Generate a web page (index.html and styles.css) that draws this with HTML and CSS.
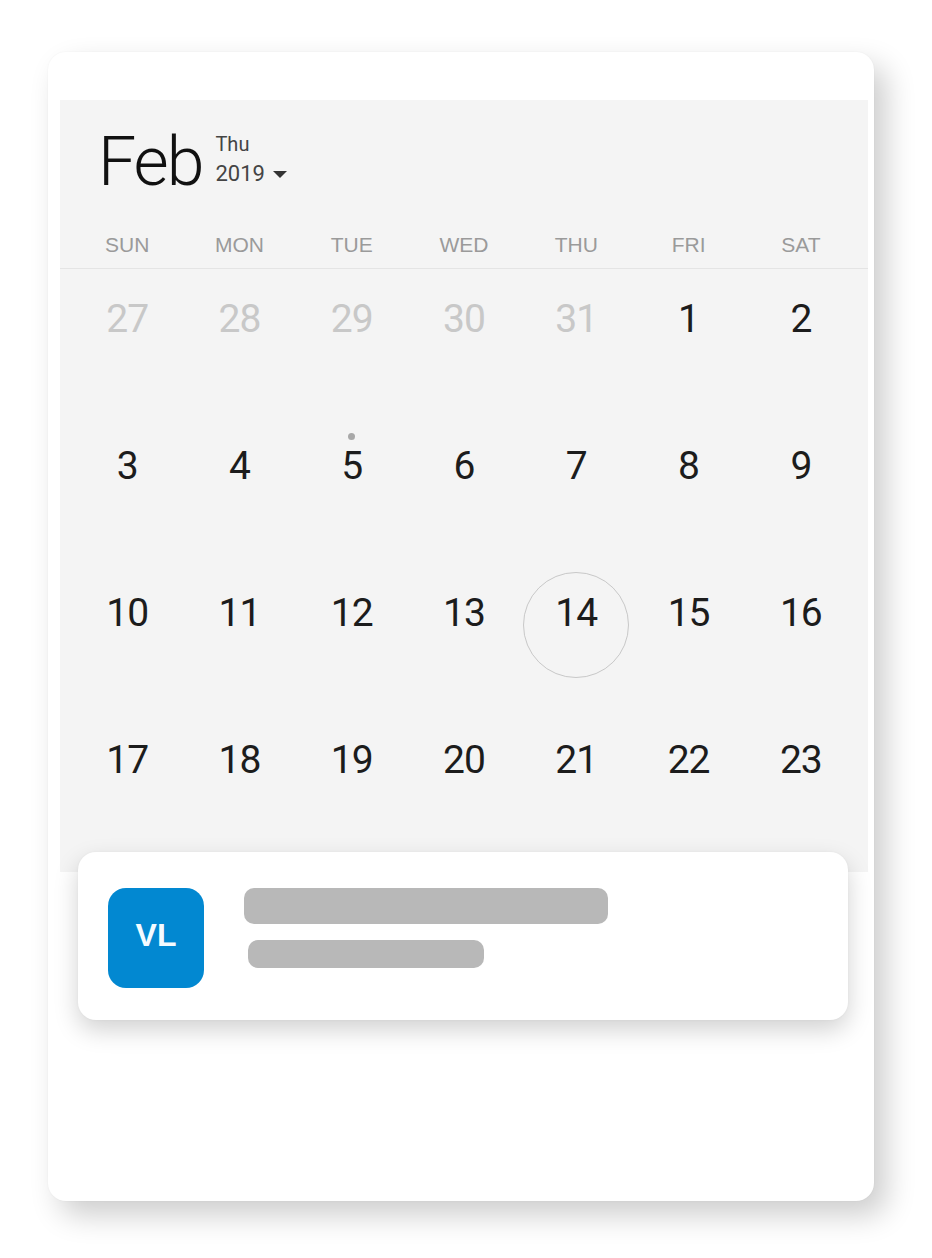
FILE: index.html
```html
<!DOCTYPE html>
<html>
<head>
<meta charset="utf-8">
<link rel="stylesheet" href="styles.css">
</head>
<body>
<div class="phone">
  <div class="calendar">
    <div class="header">
      <div class="month">Feb</div>
      <div class="meta">
        <div class="day-name">Thu</div>
        <div class="year">2019 <span class="caret"></span></div>
      </div>
    </div>
    <div class="weekdays">
      <div>SUN</div><div>MON</div><div>TUE</div><div>WED</div><div>THU</div><div>FRI</div><div>SAT</div>
    </div>
    <div class="days">
      <div class="day muted">27</div>
      <div class="day muted">28</div>
      <div class="day muted">29</div>
      <div class="day muted">30</div>
      <div class="day muted">31</div>
      <div class="day">1</div>
      <div class="day">2</div>
      <div class="day">3</div>
      <div class="day">4</div>
      <div class="day event">5</div>
      <div class="day">6</div>
      <div class="day">7</div>
      <div class="day">8</div>
      <div class="day">9</div>
      <div class="day">10</div>
      <div class="day">11</div>
      <div class="day">12</div>
      <div class="day">13</div>
      <div class="day today">14</div>
      <div class="day">15</div>
      <div class="day">16</div>
      <div class="day">17</div>
      <div class="day">18</div>
      <div class="day">19</div>
      <div class="day">20</div>
      <div class="day">21</div>
      <div class="day">22</div>
      <div class="day">23</div>
    </div>
  </div>
  <div class="event-card">
    <div class="avatar">VL</div>
    <div class="lines">
      <div class="bar bar-long"></div>
      <div class="bar bar-short"></div>
    </div>
  </div>
</div>
</body>
</html>
```

FILE: styles.css
```css
html, body {
  margin: 0;
  padding: 0;
  background: #ffffff;
}

body {
  width: 932px;
  height: 1258px;
  overflow: hidden;
  font-family: Roboto, "Liberation Sans", sans-serif;
}

.phone {
  margin: 52px 0 0 48px;
  width: 826px;
  box-sizing: border-box;
  padding: 48px 6px 181px 12px;
  background: #ffffff;
  border-radius: 18px;
  box-shadow: 12px 14px 30px rgba(0, 0, 0, 0.2), 0 0 2px rgba(0, 0, 0, 0.05);
}

.calendar {
  background: #f4f4f4;
  padding: 28px 0 15px 0;
}

.header {
  display: flex;
  align-items: flex-start;
  padding-left: 38px;
  height: 68px;
}

.month {
  font-family: Roboto, sans-serif;
  font-weight: 300;
  font-size: 68px;
  line-height: 68px;
  color: #111111;
  letter-spacing: -2px;
}

.meta {
  margin-left: 13px;
  margin-top: 4px;
  color: #444444;
}

.day-name {
  font-size: 20px;
  line-height: 24px;
}

.year {
  font-size: 22px;
  line-height: 26px;
  margin-top: 5px;
  display: flex;
  align-items: center;
}

.caret {
  display: inline-block;
  width: 0;
  height: 0;
  margin-left: 8px;
  margin-top: 1px;
  border-left: 7px solid transparent;
  border-right: 7px solid transparent;
  border-top: 7px solid #333333;
}

.weekdays {
  display: grid;
  grid-template-columns: repeat(7, 1fr);
  padding: 34px 11px 8px 11px;
  border-bottom: 1px solid #e4e4e4;
  font-family: "Liberation Sans", Arial, sans-serif;
  font-size: 21px;
  line-height: 30px;
  color: #9a9a9a;
  text-align: center;
}

.days {
  display: grid;
  grid-template-columns: repeat(7, 1fr);
  grid-auto-rows: 147px;
  padding: 0 11px;
}

.day {
  position: relative;
  box-sizing: border-box;
  padding-top: 30px;
  text-align: center;
  font-family: Roboto, sans-serif;
  font-size: 39px;
  line-height: 40px;
  letter-spacing: -1px;
  color: #1c1c1c;
}

.day.muted {
  color: #c8c8c8;
}

.day.event::before {
  content: "";
  position: absolute;
  top: 17px;
  left: 50%;
  width: 7px;
  height: 7px;
  margin-left: -4px;
  border-radius: 50%;
  background: #a8a8a8;
}

.day.today::before {
  content: "";
  position: absolute;
  top: 9px;
  left: 50%;
  width: 106px;
  height: 106px;
  margin-left: -53px;
  box-sizing: border-box;
  border: 1.5px solid #c8c8c8;
  border-radius: 50%;
}

.event-card {
  position: relative;
  display: flex;
  align-items: flex-start;
  margin: -20px 20px 0 18px;
  padding: 36px 30px 32px 30px;
  background: #ffffff;
  border-radius: 18px;
  box-shadow: 0 10px 24px rgba(0, 0, 0, 0.18), 0 0 3px rgba(0, 0, 0, 0.04);
}

.avatar {
  width: 96px;
  height: 100px;
  box-sizing: border-box;
  padding-bottom: 5px;
  border-radius: 18px;
  background: #0288d1;
  color: #f4fbff;
  font-family: "Liberation Sans", Arial, sans-serif;
  font-weight: bold;
  font-size: 32px;
  display: flex;
  align-items: center;
  justify-content: center;
}

.lines {
  margin-left: 40px;
  display: flex;
  flex-direction: column;
}

.bar {
  background: #b8b8b8;
  border-radius: 10px;
}

.bar-long {
  width: 364px;
  height: 36px;
}

.bar-short {
  width: 236px;
  height: 28px;
  margin-top: 16px;
  margin-left: 4px;
}
```
